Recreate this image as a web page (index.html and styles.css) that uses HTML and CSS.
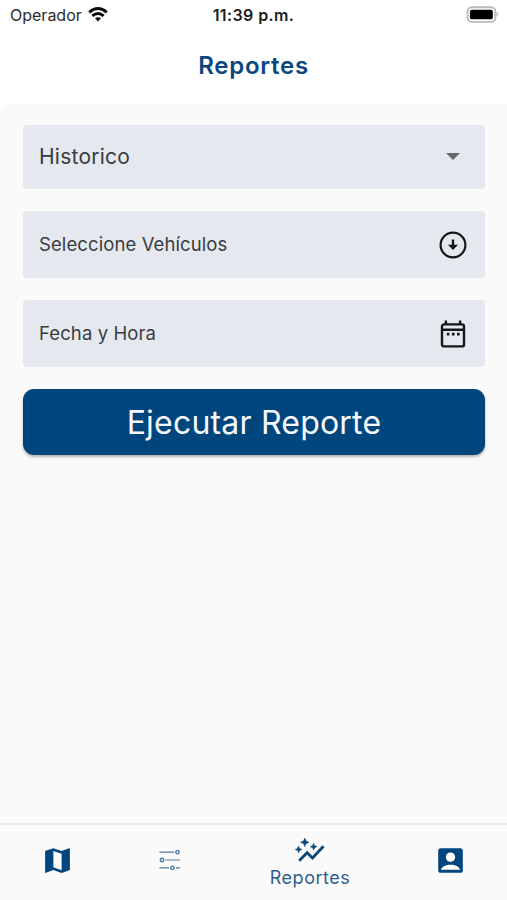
FILE: index.html
```html
<!DOCTYPE html>
<html lang="es">
<head>
<meta charset="utf-8">
<title>Reportes</title>
<link rel="stylesheet" href="styles.css">
</head>
<body>
<div class="app">
  <div class="status">
    <div class="carrier"><span>Operador</span>
      <svg class="wifi" viewBox="0 0 20 15" width="20" height="15"><g fill="none" stroke="#0b0b0b" stroke-width="2.9"><path d="M1.2 5.4Q10-2.2 18.8 5.4"/><path d="M4.3 8.9Q10 4 15.7 8.9"/></g><path d="M10 14.6l-3-3.3Q10 9.2 13 11.3z" fill="#0b0b0b"/></svg>
    </div>
    <div class="time">11:39 p.m.</div>
    <div class="power">
      <svg viewBox="0 0 34 18" width="33" height="17"><rect x="1.2" y="1.2" width="29.4" height="15.6" rx="4.6" fill="#fff" stroke="#bcbcbc" stroke-width="2.1"/><rect x="3.7" y="3.9" width="24.2" height="10.2" rx="2" fill="#000"/><path d="M32 6.7q1.5.6 1.5 2.3T32 11.3z" fill="#aaa"/></svg>
    </div>
  </div>
  <h1 class="title">Reportes</h1>
  <main class="content">
    <div class="field select"><span>Historico</span>
      <svg viewBox="0 0 14 7" width="14" height="7"><path d="M0 0h14L7 7z" fill="#666a6e"/></svg>
    </div>
    <div class="field"><span>Seleccione Vehículos</span>
      <svg viewBox="0 0 28 28" width="28" height="28"><circle cx="14" cy="14" r="12.4" fill="none" stroke="#15171a" stroke-width="2.2"/><path d="M12.8 8.6h2.4v5.1h3.9L14 18.9l-5.1-5.2h3.9z" fill="#15171a"/></svg>
    </div>
    <div class="field"><span>Fecha y Hora</span>
      <svg viewBox="0 0 28 28" width="28" height="28"><g fill="none" stroke="#15171a" stroke-width="2.4"><rect x="3" y="4.4" width="22" height="22" rx="2"/><path d="M3 9.8h22M6.9.6v4M21.1.6v4"/></g><path d="M7.8 12.8h2.6v2.6H7.8zM12.9 12.8h2.6v2.6h-2.6zM18 12.8h2.6v2.6H18z" fill="#15171a"/></svg>
    </div>
    <button class="run">Ejecutar Reporte</button>
  </main>
  <nav class="nav">
    <a class="item"><svg viewBox="0 0 24 24" width="33" height="33"><path fill="#00457c" d="M20.5 3l-.16.03L15 5.1 9 3 3.36 4.9c-.21.07-.36.25-.36.48V20.5c0 .28.22.5.5.5l.16-.03L9 18.9l6 2.1 5.64-1.9c.21-.07.36-.25.36-.48V3.5c0-.28-.22-.5-.5-.5zM15 19l-6-2.11V5l6 2.11z"/></svg></a>
    <a class="item"><svg viewBox="0 0 22 22" width="22" height="22"><g fill="none" stroke="#4f7ba4" stroke-width="1.2"><path d="M.5 3.2h14.7M6.5 11h14.6M.5 18.8H10M17 18.8h4.1"/><g stroke-width="1.4"><circle cx="18.5" cy="3.2" r="1.7"/><circle cx="3" cy="11" r="1.7"/><circle cx="13.5" cy="18.8" r="1.7"/></g></g></svg></a>
    <a class="item active"><svg viewBox="0 0 30 26" width="30" height="26"><path d="M4.2 22.8L12.1 14.7l5.4 5.3L28.5 8.3" fill="none" stroke="#0b4679" stroke-width="2.8"/><path fill="#0b4679" stroke="#0b4679" stroke-width=".5" d="M9.8 0l1.3 3 3 1.3-3 1.3-1.3 3-1.3-3-3-1.3 3-1.3zM18.6 5.3l1 2.4 2.4 1-2.4 1-1 2.4-1-2.4-2.4-1 2.4-1zM3.6 8l1 2.4 2.4 1-2.4 1-1 2.4-1-2.4-2.4-1 2.4-1z"/></svg><span>Reportes</span></a>
    <a class="item"><svg viewBox="0 0 25 25" width="25" height="25"><rect x=".2" y=".2" width="24.6" height="24.6" rx="2.6" fill="#00457c"/><circle cx="12.5" cy="9.1" r="4.7" fill="#fff"/><path d="M2.8 21.8C5 15 20 15 22.2 21.8z" fill="#fff"/></svg></a>
  </nav>
</div>
</body>
</html>
```

FILE: styles.css
```css
* { box-sizing: border-box; }
body { margin: 0; font-family: Inter, "Liberation Sans", sans-serif; background: #fff; }
.app { width: 507px; height: 900px; display: flex; flex-direction: column; overflow: hidden; }
.status { height: 30px; flex: none; display: grid; grid-template-columns: 1fr auto 1fr; align-items: center; padding: 0 8px 2px 10px; }
.carrier { display: flex; align-items: center; gap: 6px; font-size: 16px; line-height: 20px; color: #2c2c2c; padding-top: 1px; }
.time { font-size: 16px; line-height: 20px; font-weight: 600; color: #1c1c1c; letter-spacing: .4px; padding-top: 1px; margin-right: 2px; }
.power { display: flex; justify-content: flex-end; }
.title { flex: none; height: 74px; margin: 0; text-align: center; font-size: 24px; line-height: 72px; font-weight: 600; letter-spacing: .75px; color: #0a477f; }
.content { flex: 1; background: #fafafa; border-top-left-radius: 8px; padding: 21px 22px 0 23px; display: flex; flex-direction: column; gap: 22px; }
.field { height: 67px; flex: none; display: flex; align-items: center; justify-content: space-between; padding: 0 18px 0 16px; background: #e5e8ee; border-radius: 4px; font-size: 18.5px; letter-spacing: .1px; color: #383c40; }
.field span { padding-bottom: 1px; }
.select { height: 64px; padding-right: 25px; padding-bottom: 1px; font-size: 21px; letter-spacing: .25px; }
.run { height: 66px; flex: none; border: 0; padding: 0; border-radius: 11px; background: #00457c; color: #f6f9ff; font: 400 32px/68px Inter, "Liberation Sans", sans-serif; letter-spacing: .2px; box-shadow: 0 2px 3px rgba(0, 0, 0, .28); }
.nav { height: 77px; flex: none; display: grid; grid-template-columns: 114px 112px 168px 113px; background: #fafafa; border-top: 2px solid #e9e9ea; padding-bottom: 5px; }
.item { display: flex; flex-direction: column; align-items: center; justify-content: center; }
.active { gap: 3px; font-size: 18px; line-height: 22px; letter-spacing: .5px; color: #315d8d; padding-top: 6px; }
```
